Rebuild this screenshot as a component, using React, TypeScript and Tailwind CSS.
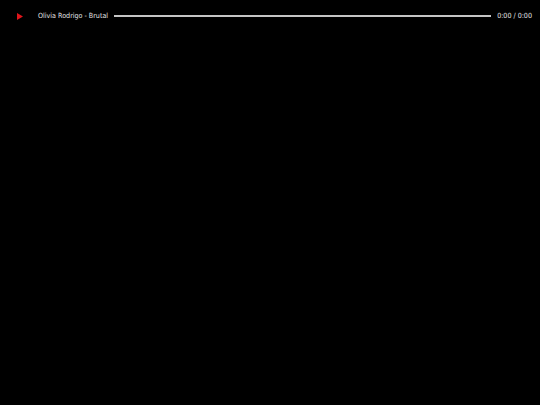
import React from 'react';

const App = () => {
    return (
        <div className="w-[540px] h-[405px] bg-black overflow-hidden">
            <div className="flex items-center h-[32px] pl-[17px] pr-[8px] gap-[6px] text-[7.1px] text-[#e4e4e4] font-['DejaVu_Sans_Condensed',sans-serif]">
                <svg width="6" height="7" viewBox="0 0 6 7" className="shrink-0">
                    <path d="M0 0 L6 3.5 L0 7 Z" fill="#e0151b" />
                </svg>
                <span className="ml-[9px] whitespace-nowrap">Olivia Rodrigo - Brutal</span>
                <div className="flex-1 h-[2px] bg-[#c4c4c4]" />
                <span className="whitespace-nowrap">0:00 / 0:00</span>
            </div>
        </div>
    );
};

export default App;
